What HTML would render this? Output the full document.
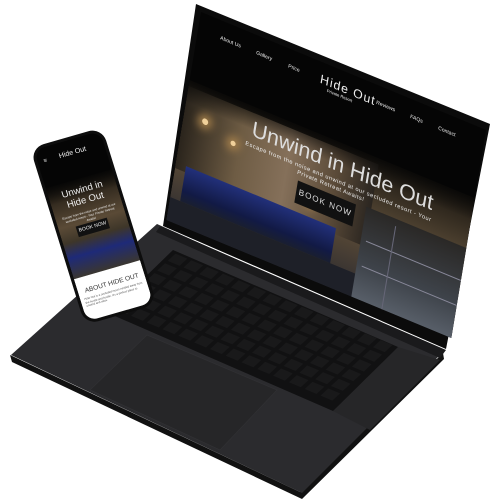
<!DOCTYPE html>
<html><head><style>
html,body{margin:0;padding:0;background:#fff;width:500px;height:500px;overflow:hidden;font-family:"Liberation Sans",sans-serif}
.abs{position:absolute}
#scr{position:absolute;left:0;top:0;width:285px;height:208px;transform-origin:0 0;transform:matrix(1,0.414,-0.1667,1,201,12);overflow:hidden;background:#050505}
#ph{position:absolute;left:0;top:0;width:74px;height:185px;transform-origin:0 0;transform:matrix(0.973,-0.28,0.297,0.957,30,148);background:#0d0d0d;border-radius:14px}
#phs{position:absolute;left:3px;top:3px;right:3px;bottom:3px;border-radius:11px;overflow:hidden;background:#050505}
.c{color:#eee;white-space:nowrap}
</style></head><body>
<svg class="abs" style="left:0;top:0" width="500" height="500">
  <polygon points="10,355 300,492 443,353 444,359 302,499 12,362" fill="#111"/>
  <polygon points="157,224 443,352 302,493 11,355" fill="#2b2b2e"/>
  <polygon points="160,226 446,350 440,358 156,232" fill="#1a1a1c"/>
  <polygon points="398,347 440,360 370,430 333,411" fill="#262628"/>
  <polygon points="173,250 398,347 333,411 108,313" fill="#111112"/>
  <g fill="#19191a" id="keys"></g>
  <polygon points="147,335 277,390 220,450 90,390" fill="#262628" stroke="#303033" stroke-width="0.8"/>
  <polygon points="196,4 490,124 446,349 163,226" fill="#0b0b0b"/>
</svg>
<div id="scr">
  <div class="abs" style="left:0;top:68px;width:285px;height:140px;background:linear-gradient(180deg,#1a1610 0%,#4a3e2e 35%,#5a4a36 55%,#2a2a30 100%)"></div>
  <div class="abs" style="left:0;top:74px;width:190px;height:82px;background:linear-gradient(90deg,#2a241c,#6e5c44 30%,#85705a 55%,#5a4a38 80%,#2a2520)"></div>
  <div class="abs" style="left:18px;top:98px;width:6px;height:6px;border-radius:50%;background:#f0d09a;box-shadow:0 0 8px 4px #a8824c"></div>
  <div class="abs" style="left:48px;top:108px;width:5px;height:5px;border-radius:50%;background:#f0d09a;box-shadow:0 0 8px 4px #a8824c"></div>
  <div class="abs" style="left:130px;top:133px;width:5px;height:5px;border-radius:50%;background:#f0d09a;box-shadow:0 0 8px 4px #a8824c"></div>
  <div class="abs" style="left:10px;top:150px;width:150px;height:35px;background:linear-gradient(180deg,#22307a,#121a45 70%,#1a1f30)"></div>
  <div class="abs" style="left:0;top:185px;width:190px;height:25px;background:#1e2028"></div>
  <div class="abs" style="left:185px;top:118px;width:100px;height:92px;background:linear-gradient(180deg,#2a2826,#3e434a 60%,#59606a)"></div>
  <div class="abs" style="left:190px;top:150px;width:95px;height:1px;background:#889"></div>
  <div class="abs" style="left:190px;top:175px;width:95px;height:1px;background:#889"></div>
  <div class="abs" style="left:215px;top:125px;width:1px;height:85px;background:#667"></div>
  <div class="abs" style="left:0;top:0;width:285px;height:90px;background:linear-gradient(180deg,#050505 68%,rgba(5,5,5,0))"></div>
  <div class="abs c" style="left:22px;top:14px;font-size:5px">About Us</div>
  <div class="abs c" style="left:58px;top:14px;font-size:5px">Gallery</div>
  <div class="abs c" style="left:90px;top:14px;font-size:5px">Price</div>
  <div class="abs c" style="left:122px;top:9px;font-size:12px;letter-spacing:1px">Hide Out</div>
  <div class="abs c" style="left:130px;top:22px;font-size:4px">Private Resort</div>
  <div class="abs c" style="left:178px;top:14px;font-size:5px">Reviews</div>
  <div class="abs c" style="left:212px;top:14px;font-size:5px">FAQs</div>
  <div class="abs c" style="left:240px;top:14px;font-size:5px">Contact</div>
  <div class="abs c" style="left:66px;top:78px;font-size:21px;color:#ddd">Unwind in Hide Out</div>
  <div class="abs c" style="left:62px;top:103px;font-size:5.5px;letter-spacing:.5px">Escape from the noise and unwind at our secluded resort - Your</div>
  <div class="abs c" style="left:115px;top:110px;font-size:5.5px;letter-spacing:.5px">Private Retreat Awaits!</div>
  <div class="abs c" style="left:117px;top:120px;width:58px;height:22px;background:#111;color:#ddd;font-size:8px;letter-spacing:1px;line-height:22px;text-align:center">BOOK NOW</div>
</div>
<div id="ph"><div id="phs">
  <div class="abs" style="left:0;top:40px;width:68px;height:95px;background:linear-gradient(180deg,#1a1610,#5a4a36 45%,#3e3629 62%,#1e2a78 78%,#3a3630)"></div>
  <div class="abs" style="left:0;top:0;width:68px;height:58px;background:linear-gradient(180deg,#050505 65%,rgba(5,5,5,0))"></div>
  <div class="abs c" style="left:6px;top:11px;font-size:6px">≡</div>
  <div class="abs c" style="left:22px;top:10px;font-size:7px">Hide Out</div>
  <div class="abs c" style="left:11px;top:46px;font-size:9.5px;line-height:11px;text-align:center;width:46px;white-space:normal">Unwind in Hide Out</div>
  <div class="abs c" style="left:4px;top:72px;font-size:3px;width:60px;white-space:normal;text-align:center">Escape from the noise and unwind at our secluded resort - Your Private Retreat Awaits!</div>
  <div class="abs c" style="left:17px;top:85px;width:32px;height:11px;background:#111;font-size:5px;line-height:11px;text-align:center">BOOK NOW</div>
  <div class="abs" style="left:0;top:135px;width:68px;height:50px;background:#fff"></div>
  <div class="abs" style="left:7px;top:146px;font-size:6.5px;color:#333;white-space:nowrap">ABOUT HIDE OUT</div>
  <div class="abs" style="left:4px;top:156px;width:60px;font-size:2.8px;color:#555;line-height:3.5px">Hide Out is a secluded resort nestled away from the hustle and bustle. It's a perfect place to unwind and relax.</div>
</div></div>
<script>
var g=document.getElementById('keys'),s='';
var ox=175,oy=252,ux=(396-175)/14,uy=(345-252)/14,vx=(110-175)/6.2,vy=(312-252)/6.2;
for(var r=0;r<6;r++)for(var c=0;c<14;c++){
 var k=0.75,x=ox+c*ux+r*vx+(ux+vx)*0.1,y=oy+c*uy+r*vy+(uy+vy)*0.1;
 s+='<polygon points="'+[x,y,x+ux*k,y+uy*k,x+ux*k+vx*k,y+uy*k+vy*k,x+vx*k,y+vy*k].map(function(n){return n.toFixed(1)}).join(',')+'"/>';}
g.innerHTML=s;
</script>
</body></html>
